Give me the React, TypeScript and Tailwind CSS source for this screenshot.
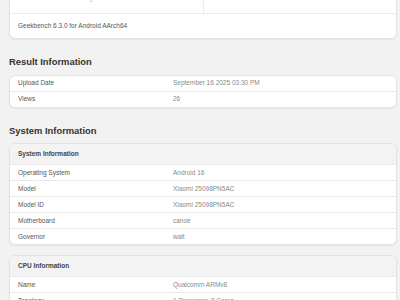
const rowsResult = [
    ['Upload Date', 'September 16 2025 03:30 PM'],
    ['Views', '26'],
];

const rowsSystem = [
    ['Operating System', 'Android 16'],
    ['Model', 'Xiaomi 25098PN5AC'],
    ['Model ID', 'Xiaomi 25098PN5AC'],
    ['Motherboard', 'canoe'],
    ['Governor', 'walt'],
];

const rowsCpu = [
    ['Name', 'Qualcomm ARMv8'],
    ['Topology', '1 Processor, 8 Cores'],
];

const Heading = ({ title }: { title: string }) => (
    <h2 className="mt-[17px] mb-[6.5px] h-[12px] text-[9.4px] leading-[12px] font-bold text-[#333333]">{title}</h2>
);

const Rows = ({ rows, first }: { rows: string[][]; first?: boolean }) => (
    <>
        {rows.map(([label, value], i) => (
            <div
                key={label}
                className={`flex items-center text-[6.5px] ${i === 0 && first ? 'h-[15px]' : 'h-[16px] border-t border-[#e9e9e9]'}`}
            >
                <div className="w-[155px] shrink-0 px-2 text-[#555555]">{label}</div>
                <div className="flex-1 px-2 text-[#8a8a8a]">{value}</div>
            </div>
        ))}
    </>
);

const Card = ({ children, className }: { children: React.ReactNode; className?: string }) => (
    <div
        className={`overflow-hidden rounded-[6px] border border-[#e3e3e3] bg-white shadow-[0_1px_2px_rgba(0,0,0,0.06)] ${className ?? ''}`}
    >
        {children}
    </div>
);

const TableCard = ({ title, rows, className }: { title: string; rows: string[][]; className?: string }) => (
    <Card className={className}>
        <div className="flex h-[20px] items-center bg-[#f3f3f3] px-2 text-[6.5px] font-bold text-[#444444]">
            {title}
        </div>
        <Rows rows={rows} />
    </Card>
);

export default function App() {
    return (
        <div
            className="h-[300px] w-[400px] overflow-hidden bg-[#f2f2f2] pr-[3px] pl-[9px]"
            style={{ fontFamily: '"Liberation Sans", Arial, sans-serif' }}
        >
            <Card className="-mt-[28px]">
                <div className="flex border-b border-[#ececec]">
                    <div className="flex h-[40px] flex-1 items-end justify-center border-r border-[#ececec] pb-[10px] text-[6.5px] text-[#c4c4c4]">
                        Single-Core Score
                    </div>
                    <div className="flex h-[40px] flex-1 items-end justify-center pb-[10px] text-[6.5px] text-[#c4c4c4]">
                        Multi-Core Score
                    </div>
                </div>
                <div className="flex h-[24px] items-center px-2 text-[6.5px] text-[#555555]">
                    Geekbench 6.3.0 for Android AArch64
                </div>
            </Card>

            <Heading title="Result Information" />
            <Card>
                <Rows rows={rowsResult} first />
            </Card>

            <Heading title="System Information" />
            <TableCard title="System Information" rows={rowsSystem} />
            <TableCard title="CPU Information" rows={rowsCpu} className="mt-[10px]" />
        </div>
    );
}
